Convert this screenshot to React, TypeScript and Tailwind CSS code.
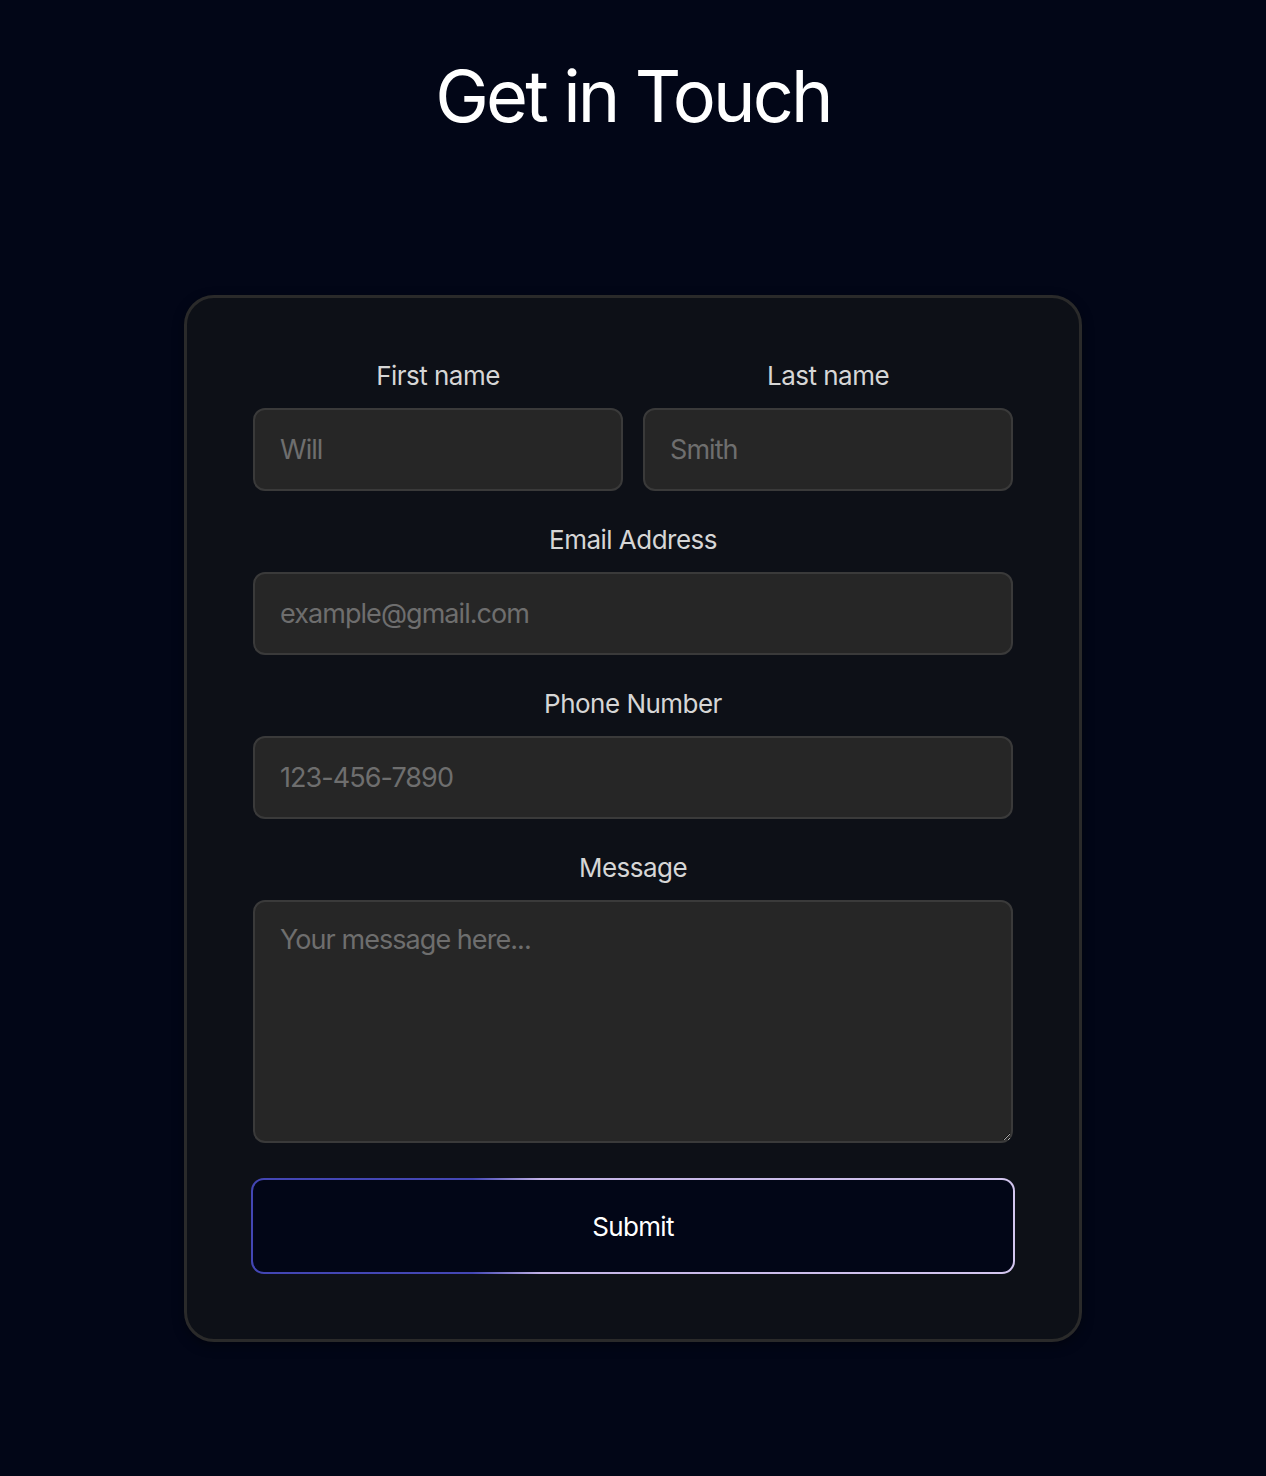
import React from 'react';

const font = { fontFamily: 'Inter, "Noto Sans", sans-serif' };

const Label = ({ children }: { children: React.ReactNode }) => (
  <label className="block text-center text-[26px] leading-[32px] tracking-[-0.02em] text-[#d6d6d6] mb-4">
    {children}
  </label>
);

const inputCls =
  'w-full h-[83px] rounded-[12px] border-2 border-[#3a3a3a] bg-[#262626] px-[25px] text-[27px] tracking-[-0.035em] text-[#e5e5e5] placeholder:text-[#6e6e6e] outline-none';

export default function App() {
  return (
    <div className="min-h-screen bg-[#020617] flex flex-col items-center pt-[60px] pb-[135px]" style={font}>
      <h1 className="text-[72px] leading-none text-white tracking-[-0.04em]">Get in Touch</h1>

      <form
        onSubmit={(e) => e.preventDefault()}
        className="mt-[163px] w-[898px] rounded-[30px] border-[3px] border-[#2a2a2a] bg-[#0d1017] px-[66px] pt-[62px] pb-[65px] shadow-[0_4px_12px_rgba(0,0,0,0.35)]"
      >
        <div className="grid grid-cols-2 gap-5">
          <div>
            <Label>First name</Label>
            <input className={inputCls} placeholder="Will" />
          </div>
          <div>
            <Label>Last name</Label>
            <input className={inputCls} placeholder="Smith" />
          </div>
        </div>

        <div className="mt-[33px]">
          <Label>Email Address</Label>
          <input className={inputCls} placeholder="example@gmail.com" />
        </div>

        <div className="mt-[33px]">
          <Label>Phone Number</Label>
          <input className={inputCls} placeholder="123-456-7890" />
        </div>

        <div className="mt-[33px]">
          <Label>Message</Label>
          <textarea
            className="block w-full h-[243px] rounded-[12px] border-2 border-[#3a3a3a] bg-[#262626] px-[25px] py-[18px] text-[27px] tracking-[-0.035em] text-[#e5e5e5] placeholder:text-[#6e6e6e] outline-none"
            placeholder="Your message here..."
          />
        </div>

        <div className="mt-[35px] -mx-[2px] rounded-[13px] p-[2px] bg-[linear-gradient(90deg,#4346b4_0%,#4447b5_29%,#c3b3e6_38%,#d3c6ef_100%)]">
          <button
            type="submit"
            className="block w-full h-[92px] rounded-[11px] bg-[#020617] text-white text-[26px] tracking-[-0.025em]"
          >
            Submit
          </button>
        </div>
      </form>
    </div>
  );
}
